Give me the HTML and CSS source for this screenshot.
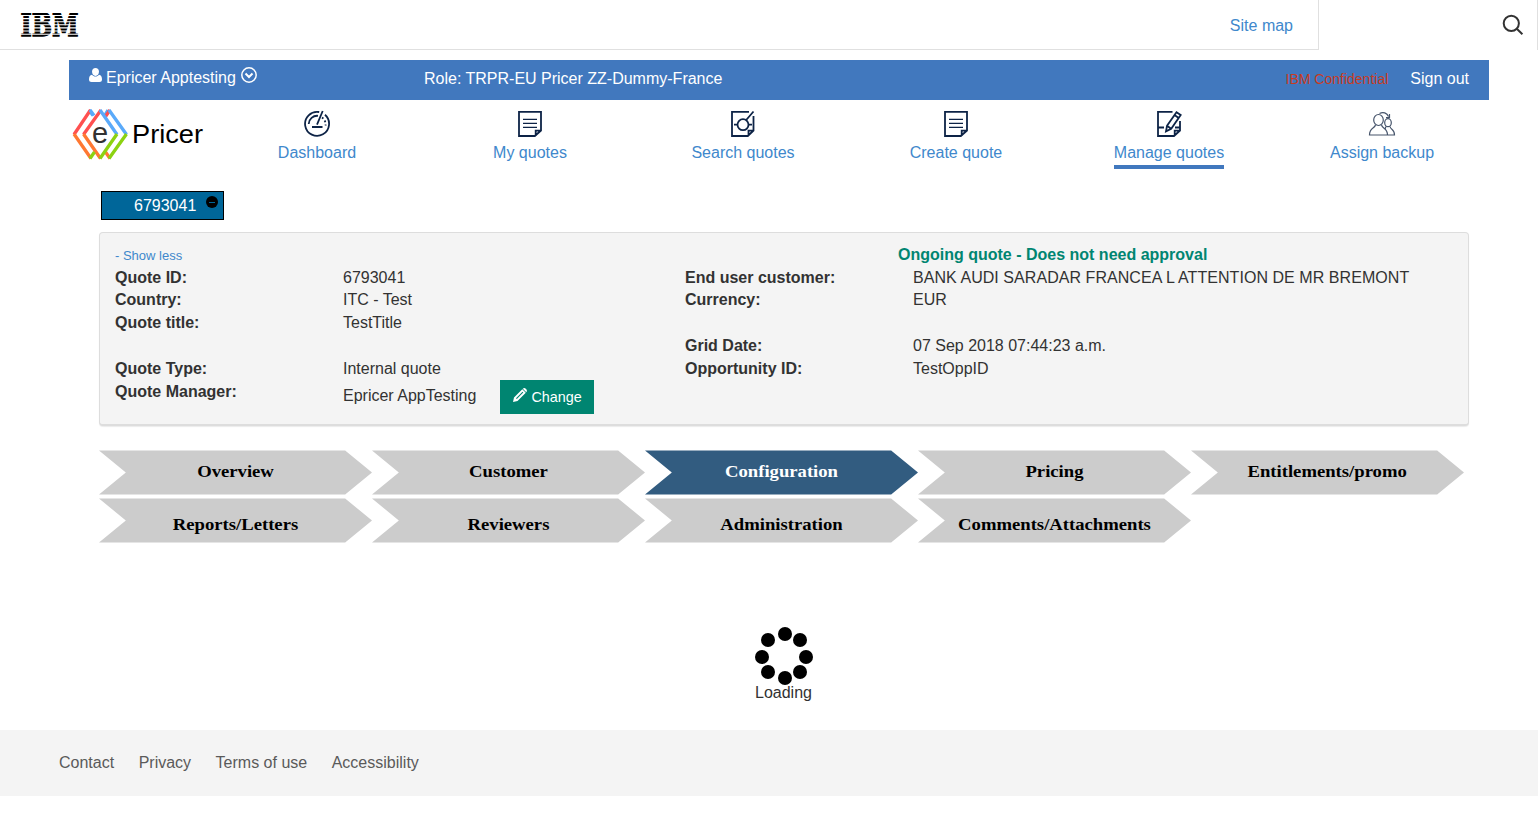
FILE: index.html
```html
<!DOCTYPE html>
<html lang="en">
<head>
<meta charset="utf-8">
<title>ePricer</title>
<link rel="stylesheet" href="styles.css">
</head>
<body>
<svg class="defs" aria-hidden="true">
  <symbol id="doc" viewBox="0 0 28 28">
    <path d="M3 1.9H25V20.5L18.8 26H3ZM25 20.7H19.7V26" />
    <path d="M7 9.4H21M7 13.4H21M7 17.4H21" stroke-width="1.3"/>
  </symbol>
</svg>
<header class="masthead">
  <svg class="ibm" width="64" height="30" viewBox="0 0 64 30">
    <text x="0.500" y="23.400" textLength="58" lengthAdjust="spacingAndGlyphs">IBM</text>
    <path class="gaps" d="M0 2.500H60M0 5.600H60M0 8.700H60M0 11.800H60M0 14.900H60M0 18H60M0 21.300H60"/>
  </svg>
  <a class="sitemap">Site map</a>
  <div class="search">
    <svg width="22" height="22" viewBox="0 0 22 22"><circle cx="9.3" cy="9.3" r="7.6"/><path d="M14.8 14.8L20.4 20.2"/></svg>
  </div>
</header>
<div class="shell">
  <div class="userbar">
    <div class="user">
      <svg class="person" width="13" height="14" viewBox="0 0 13 14"><path d="M6.5 0C8.6 0 10 1.7 10 3.8S8.500 8 6.500 8 3 5.900 3 3.800 4.400 0 6.500 0Z"/><path d="M3 6.800C4.800 9.200 8.200 9.200 10 6.800 12.200 7 13 9 13 11.500 13 13.200 12 14 10.500 14H2.500C1 14 0 13.200 0 11.500 0 9 .8 7 3 6.800Z"/></svg>
      <span>Epricer Apptesting</span>
      <svg class="drop" width="16" height="16" viewBox="0 0 16 16"><circle cx="8" cy="8" r="7.200"/><path class="tick" d="M4.500 6.500L8 10L11.500 6.500"/></svg>
    </div>
    <div class="role">Role: TRPR-EU Pricer ZZ-Dummy-France</div>
    <div class="confidential">IBM Confidential</div>
    <a class="signout">Sign out</a>
  </div>
  <nav class="nav">
    <svg class="logo" width="138" height="54" viewBox="0 0 138 54">
      <g fill="none" stroke-width="3.300">
        <path stroke="#5aaafa" d="M18 2L22 7.500M34 7L37 2"/>
        <path stroke="#ff5050" d="M19.500 2L3 26.500M39 2L34.500 8.500M30 2L12.500 26.500"/>
        <path stroke="#5aaafa" d="M19 2L23 7.500M29 2L46 26.500M38 2L55.500 26.500"/>
        <path stroke="#ff7832" d="M3 26L20 50.500M12.500 26L29.500 50.500M34.500 44L39 50.500"/>
        <path stroke="#8cd211" d="M55.500 26L38 50.500M46 26L29 50.500M23.500 44L19 50.500"/>
      </g>
      <text class="logo-e" x="21" y="35">e</text>
      <text class="logo-name" x="61" y="34.500" textLength="71" lengthAdjust="spacingAndGlyphs">Pricer</text>
    </svg>
    <a class="item"><svg class="icon" viewBox="0 0 28 28"><path d="M16.200 2A12 12 0 1 0 22 4.800M5.700 14A8.500 8.500 0 0 1 15 5.800M19.700 1L14 14.700M9 17H19.500"/><path stroke-dasharray="1.800 2.200" d="M19 7.500A8.300 8.300 0 0 1 22.500 15.500"/></svg><span>Dashboard</span></a>
    <a class="item"><svg class="icon"><use href="#doc"/></svg><span>My quotes</span></a>
    <a class="item"><svg class="icon" viewBox="0 0 28 28"><path d="M20 1.900H3V26H18.800L24.500 20.500V6M24.500 20.700H19.500V26"/><circle cx="14" cy="14.700" r="5.500"/><path d="M17.200 10L24.500 1.500M5 14.700H8.500M19.500 14.700H23"/></svg><span>Search quotes</span></a>
    <a class="item"><svg class="icon"><use href="#doc"/></svg><span>Create quote</span></a>
    <a class="item"><svg class="icon" viewBox="0 0 28 28"><path d="M17.500 1.900H3V26H19L25 20.500V11M25 20.700H19.700V26M3 17.500H9M20 17.500H25"/><path d="M12 15.800L21.500 2.200L25.700 5L16.200 18.700L11 21.300ZM19.500 5L23.700 8M12 15.800L16.200 18.700"/></svg><span class="active">Manage quotes</span></a>
    <a class="item"><svg class="icon people" viewBox="0 0 28 28"><ellipse cx="10.500" cy="10" rx="4.800" ry="5.500"/><path d="M7.500 15C6.500 19 1.500 17.500 1.500 25H19.500C19.500 18 14.500 19 13.500 15"/><ellipse cx="20" cy="12.700" rx="3.300" ry="4"/><path d="M18 16.500L17 19M22 16.500C22.500 20 26.500 18.500 26.500 25H20M11.500 3.500C15 1.500 19 2.800 20.500 6.500M21.500 4V7.500H18"/></svg><span>Assign backup</span></a>
  </nav>
  <main class="content">
    <div class="tab"><span>6793041</span><i class="minus"></i></div>
    <section class="panel">
      <div class="top"><a class="less">- Show less</a><strong class="status">Ongoing quote - Does not need approval</strong></div>
      <dl class="facts">
        <dt>Quote ID:</dt><dd>6793041</dd><dt>End user customer:</dt><dd class="customer">BANK AUDI SARADAR FRANCEA L ATTENTION DE MR BREMONT</dd>
        <dt>Country:</dt><dd>ITC - Test</dd><dt>Currency:</dt><dd>EUR</dd>
        <dt>Quote title:</dt><dd>TestTitle</dd><dt></dt><dd></dd>
        <dt></dt><dd></dd><dt>Grid Date:</dt><dd>07 Sep 2018 07:44:23 a.m.</dd>
        <dt>Quote Type:</dt><dd>Internal quote</dd><dt>Opportunity ID:</dt><dd>TestOppID</dd>
        <dt>Quote Manager:</dt><dd class="manager"><span>Epricer AppTesting</span><button class="change"><svg width="14" height="14" viewBox="0 0 14 14"><path fill-rule="evenodd" d="M0 14L1 9.500L9.300 1.200L12.800 4.700L4.500 13ZM3 10.200L3.800 11L10.300 4.500L9.500 3.700ZM9.800 .7C11 -.3 12 0 13 1S14.300 3 13.300 4.200Z"/></svg>Change</button></dd>
      </dl>
    </section>
    <div class="steps">
      <svg class="step" viewBox="0 0 234 45" preserveAspectRatio="none"><path d="M0 .5H211L234 22.500L211 44.500H0L23 22.500Z"/><text x="117" y="27.500">Overview</text></svg>
      <svg class="step" viewBox="0 0 234 45" preserveAspectRatio="none"><path d="M0 .5H211L234 22.500L211 44.500H0L23 22.500Z"/><text x="117" y="27.500">Customer</text></svg>
      <svg class="step current" viewBox="0 0 234 45" preserveAspectRatio="none"><path d="M0 .5H211L234 22.500L211 44.500H0L23 22.500Z"/><text x="117" y="27.500">Configuration</text></svg>
      <svg class="step" viewBox="0 0 234 45" preserveAspectRatio="none"><path d="M0 .5H211L234 22.500L211 44.500H0L23 22.500Z"/><text x="117" y="27.500">Pricing</text></svg>
      <svg class="step" viewBox="0 0 234 45" preserveAspectRatio="none"><path d="M0 .5H211L234 22.500L211 44.500H0L23 22.500Z"/><text x="116.700" y="27.500">Entitlements/promo</text></svg>
      <svg class="step" viewBox="0 0 234 45" preserveAspectRatio="none"><path d="M0 .5H211L234 22.500L211 44.500H0L23 22.500Z"/><text x="117" y="32.500">Reports/Letters</text></svg>
      <svg class="step" viewBox="0 0 234 45" preserveAspectRatio="none"><path d="M0 .5H211L234 22.500L211 44.500H0L23 22.500Z"/><text x="117" y="32.500">Reviewers</text></svg>
      <svg class="step" viewBox="0 0 234 45" preserveAspectRatio="none"><path d="M0 .5H211L234 22.500L211 44.500H0L23 22.500Z"/><text x="117" y="32.500">Administration</text></svg>
      <svg class="step" viewBox="0 0 234 45" preserveAspectRatio="none"><path d="M0 .5H211L234 22.500L211 44.500H0L23 22.500Z"/><text x="117" y="32.500">Comments/Attachments</text></svg>
    </div>
  </main>
</div>
<div class="loading">
  <svg width="58" height="58" viewBox="0 0 58 58"><circle cx="30" cy="7" r="7"/><circle cx="45" cy="13" r="7"/><circle cx="51" cy="30" r="7"/><circle cx="45" cy="45" r="7"/><circle cx="30" cy="51" r="7"/><circle cx="13" cy="45" r="7"/><circle cx="7" cy="30" r="7"/><circle cx="13" cy="13" r="7"/></svg>
  <span>Loading</span>
</div>
<footer class="footer"><a>Contact</a><a>Privacy</a><a>Terms of use</a><a>Accessibility</a></footer>
</body>
</html>
```
FILE: styles.css
```css
* { box-sizing: border-box; }
body { margin: 0; background: #fff; color: #323232; font: 16px/22.86px "Liberation Sans", Arial, sans-serif; }
svg { display: block; flex: none; }
.defs { display: none; }
.masthead { height: 50px; display: flex; padding-left: 20px; background: linear-gradient(#e0e0e0, #e0e0e0) 0 49px / 1319px 1px no-repeat; }
.ibm { margin-top: 13px; }
.ibm text { font: bold 31px "DejaVu Serif", serif; fill: #000; stroke: #000; stroke-width: 1.300; }
.gaps { stroke: #fff; stroke-width: 1.1; }
.sitemap { margin-left: auto; padding: 15px 25px 0 0; color: #4088cc; }
.search { width: 220px; border: solid #e0e0e0; border-width: 0 1px; display: flex; justify-content: flex-end; padding: 14px 13px 0 0; }
.search svg { fill: none; stroke: #323232; stroke-width: 2; }
.shell { width: 1420px; margin: 10px 0 0 69px; }
.userbar { height: 40px; background: #4178be; color: #fff; display: flex; padding: 7px 20px 0; }
.user { width: 335px; display: flex; }
.person { margin: 1px 4px 0 0; fill: #fff; }
.drop { margin: 0 0 0 5px; fill: none; stroke: #fff; stroke-width: 1.500; }
.tick { stroke-width: 2; }
.role { padding-top: 1px; }
.confidential { margin-left: auto; padding: 1px 22px 0 0; font-size: 14px; color: #c83c1e; }
.signout { padding-top: 1px; }
.nav { height: 91px; display: flex; padding: 8px 0 0 2px; }
.logo { margin-right: 1px; }
.logo-e { font-size: 29px; fill: #323232; }
.logo-name { font-size: 26.500px; fill: #000; }
.item { width: 213px; display: flex; flex-direction: column; align-items: center; color: #4088cc; padding-top: 2px; }
.icon { width: 28px; height: 28px; margin-bottom: 4px; fill: none; stroke: #0d2346; stroke-width: 1.800; }
.people { stroke-width: 1.200; stroke: #46546b; }
.item span { height: 26px; margin-left: 1px; }
.item .active { border-bottom: 4px solid #4178be; height: 27px; }
.content { padding: 0 20px 0 30px; }
.tab { width: 123px; height: 29px; margin-left: 2px; border: 1px solid #000; background: #069; color: #fff; display: flex; padding: 3px 5px 0 32px; justify-content: space-between; }
.minus { width: 12px; height: 12px; border-radius: 50%; background: linear-gradient(#069, #069) center / 6px 1px no-repeat #000; margin-top: 1px; }
.panel { height: 194px; margin-top: 12px; border: 1px solid #ddd; border-bottom-width: 2px; border-radius: 4px; background: #f4f4f4; padding: 11px 15px 0; box-shadow: 0 1px 1px rgba(0,0,0,.08); }
.top { height: 22.500px; display: flex; }
.less { width: 783px; font-size: 13px; padding-top: 1px; color: #4088cc; }
.status { color: #008571; }
.facts { margin: 0; display: grid; grid-template-columns: 228px 342px 228px 1fr; grid-auto-rows: 22.860px; white-space: nowrap; }
.facts dt { font-weight: bold; }
.facts dd { margin: 0; }
.facts .customer { letter-spacing: .055px; }
.manager { display: flex; height: 34px; align-items: flex-start; }
.manager span { padding-top: 4px; }
.change { width: 94px; height: 34px; margin: -.5px 0 0 24px; border: 0; background: #008571; color: #fff; font: 14.400px "Liberation Sans", Arial, sans-serif; display: flex; align-items: center; padding: 0 0 0 13px; gap: 4px; }
.change svg { fill: #fff; margin-bottom: 4px; }
.steps { width: 1370px; margin-top: 24px; display: flex; flex-wrap: wrap; row-gap: 3px; }
.step { width: 273px; height: 45px; fill: #ccc; }
.step text { fill: #000; font: bold 16px "Liberation Serif", "Times New Roman", serif; text-anchor: middle; }
.current { fill: #325c80; }
.current text { fill: #fff; }
.loading { margin: 84px 0 0 755px; width: 58px; height: 103px; }
.loading span { display: block; margin-top: -3px; }
.footer { height: 66px; background: #f4f4f4; color: #5a5a5a; display: flex; gap: 24.500px; padding: 22px 59px 0; }
```
